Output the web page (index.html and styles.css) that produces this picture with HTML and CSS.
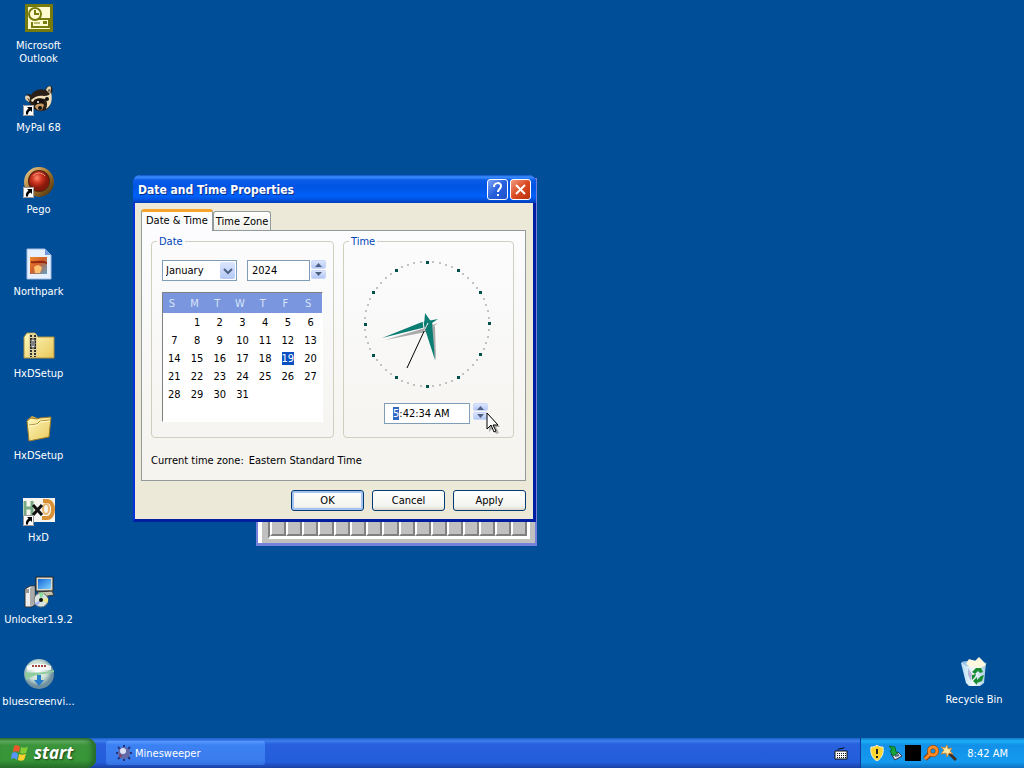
FILE: index.html
```
<!DOCTYPE html>
<html lang="en">
<head>
<meta charset="UTF-8">
<title>Date and Time Properties</title>
<link rel="stylesheet" href="styles.css">
</head>
<body>
<!-- shared shapes -->
<svg class="defs" aria-hidden="true">
  <defs>
    <symbol id="shortcut" viewBox="0 0 11 11">
      <path d="M0 0h11v11H0z" fill="#fff"/><path d="M.5.5h10v10H.5z" fill="none" stroke="#999"/>
      <path d="M4 2h5v5L7.500 5.500C5.500 6.500 5 8 5 9.500H3C2.500 7 3.500 5 5.500 3.600z" fill="#000"/>
    </symbol>
    <linearGradient id="folder" x1="0" y1="0" x2="1" y2="1"><stop offset="0" stop-color="#fffac0"/><stop offset="1" stop-color="#e8c75a"/></linearGradient>
    <radialGradient id="red" cx=".4" cy=".35"><stop offset="0" stop-color="#ff8a70"/><stop offset=".5" stop-color="#cf3520"/><stop offset="1" stop-color="#87180c"/></radialGradient>
    <linearGradient id="gold" x1="0" y1="0" x2="1" y2="1"><stop offset="0" stop-color="#f5d79a"/><stop offset=".5" stop-color="#a8742a"/><stop offset="1" stop-color="#3e2810"/></linearGradient>
    <radialGradient id="globe" cx=".45" cy=".4"><stop offset="0" stop-color="#fff"/><stop offset=".65" stop-color="#c8ddd2"/><stop offset="1" stop-color="#6d8fa0"/></radialGradient>
    <linearGradient id="bin" x1="0" y1="0" x2="1" y2="0"><stop offset="0" stop-color="#b9dcf2"/><stop offset=".5" stop-color="#f2fafc"/><stop offset="1" stop-color="#a5cbe2"/></linearGradient>
    <linearGradient id="screen" x1="0" y1="0" x2="1" y2="1"><stop offset="0" stop-color="#1565d8"/><stop offset="1" stop-color="#7fd4ff"/></linearGradient>
    <linearGradient id="photo" x1="0" y1="0" x2="1" y2="1"><stop offset="0" stop-color="#f08a30"/><stop offset=".45" stop-color="#d3602c"/><stop offset="1" stop-color="#5da3c8"/></linearGradient>
  </defs>
</svg>

<main class="desktop">
  <nav class="icons" aria-label="Desktop">
    <a href="#" class="icon">
      <svg viewBox="0 0 32 32"><path d="M2 2h28v28H2z" fill="#777a0c"/><path d="M5 5h22v22H5z" fill="#fffbd0"/><path d="M13 17h13v8H9v-5" fill="none" stroke="#777a0c" stroke-width="2"/><circle cx="12" cy="12" r="6" fill="#fffbd0" stroke="#777a0c" stroke-width="2"/><path d="M12 8v4h4" fill="none" stroke="#777a0c" stroke-width="2"/><path d="M20 19h4v3h-4z" fill="#777a0c"/><path d="M11 21h6" stroke="#777a0c"/></svg>
      <span>Microsoft Outlook</span>
    </a>
    <a href="#" class="icon">
      <svg viewBox="0 0 32 32"><path d="M3 13c0-3 2-4 5-2C11 6 17 4 22 6c1-3 4-5 6-4 2 2 2 6 0 9 1 6 0 12-5 15-6 3-14 0-16-7-3-1-4-3-4-6z" fill="#2c2118"/><path d="M2 13c1-2 4-2 5 1l-1 4c-3-1-4-3-4-5zM23 6c1-4 5-5 5-2l-1 6z" fill="#e2d2b2"/><path d="M4 14l2 1v2zM25 6l2-1-1 4z" fill="#4b3524"/><path d="M8 16c4-4 9-5 13-4 3 0 6-1 7-4 2 8 0 14-5 17 2-5 1-8-1-10-5-1-9 0-13 3z" fill="#f0dfb8"/><path d="M11 16c3-2 7-2 9-1l1 4-9 2z" fill="#17110d"/><path d="M12 22c3-3 7-3 9-1l-2 5c-3 1-6 0-7-4z" fill="#c69a62"/><circle cx="15" cy="18" r="1" fill="#fff"/><circle cx="24" cy="15" r="2" fill="#111"/><circle cx="17" cy="24" r="2" fill="#111"/><use href="#shortcut" y="21" width="11" height="11"/></svg>
      <span>MyPal 68</span>
    </a>
    <a href="#" class="icon">
      <svg viewBox="0 0 32 32"><circle cx="16" cy="16" r="15" fill="url(#gold)"/><circle cx="16" cy="15" r="11" fill="#502411"/><circle cx="16" cy="15" r="10" fill="url(#red)"/><path d="M10 10c3-4 9-4 12 0" fill="none" stroke="#e89580"/><use href="#shortcut" y="21" width="11" height="11"/></svg>
      <span>Pego</span>
    </a>
    <a href="#" class="icon">
      <svg viewBox="0 0 32 32"><path d="M4 1h18l6 6v24H4z" fill="#e6f0ff" stroke="#a5bce2"/><path d="M22 1v6h6z" fill="#719ae0"/><path d="M7 9h17v17H7z" fill="url(#photo)"/><path d="M8 13c5 1 10-2 16 1v2c-5-2-11 0-16-1z" fill="#952811"/><path d="M11 19c3-3 7-2 8 1l-2 5h-5z" fill="#ffc070"/></svg>
      <span>Northpark</span>
    </a>
    <a href="#" class="icon">
      <svg viewBox="0 0 32 32"><path d="M1 7l3-4h8l3 4h16v21H1z" fill="url(#folder)" stroke="#a98f3e"/><path d="M6 5l3-2h2l3 2v21H6z" fill="#ded19a"/><path d="M8 5v22M12 5v22" stroke="#333" stroke-width="2" stroke-dasharray="2 1"/><path d="M8 9h4v9H8z" fill="#ddd" stroke="#222"/><path d="M10 11v5" stroke="#222"/></svg>
      <span>HxDSetup</span>
    </a>
    <a href="#" class="icon">
      <svg viewBox="0 0 32 32"><path d="M4 8l5-4 5 2 2 1 12-1v4L8 13z" fill="#d4ae44"/><path d="M4 9l4-3 6 1 3-1 11-1-2 20-20 4z" fill="url(#folder)" stroke="#9b7a27"/><path d="M6 13l8-1 3-3 10-1" fill="none" stroke="#b08d38"/><path d="M6 14l8-1 3-3 10-1" fill="none" stroke="#fffbd0"/></svg>
      <span>HxDSetup</span>
    </a>
    <a href="#" class="icon">
      <svg viewBox="0 0 32 32"><path d="M0 4h32v24H0z" fill="#f7f5ef"/><path d="M2 7v14M9 7v14M2 14h7" stroke="#78aa83" stroke-width="3" fill="none"/><path d="M20 7h4c8 0 8 17 0 17h-5" stroke="#d99135" stroke-width="4" fill="none"/><ellipse cx="23" cy="15" rx="3" ry="5" fill="none" stroke="#e8b46b" stroke-width="2"/><path d="M10 11l9 10M19 11l-9 10" stroke="#111" stroke-width="3"/><use href="#shortcut" y="21" width="11" height="11"/></svg>
      <span>HxD</span>
    </a>
    <a href="#" class="icon">
      <svg viewBox="0 0 32 32"><path d="M13 1h17v14H13z" fill="#ddd9c8" stroke="#222"/><path d="M15 3h13v10H15z" fill="url(#screen)"/><path d="M14 16l15-1 2 4-12 2z" fill="#c8c4b2" stroke="#333"/><path d="M2 13l5-3h5v19l-4 2H2z" fill="#eee" stroke="#333"/><path d="M7 12l4-2v19l-4 1z" fill="#aaa"/><path d="M3 14h3M3 16h3" stroke="#444"/><circle cx="18" cy="24" r="7" fill="#d7e4df" stroke="#777"/><path d="M18 24l-2-7a7 7 0 0 1 5 0z" fill="#8fdc9f"/><path d="M18 24l-6 3a7 7 0 0 0 3 3z" fill="#a9b6ef"/><path d="M18 24l7-2a7 7 0 0 1-1 5z" fill="#efe889"/><circle cx="18" cy="24" r="2" fill="#111"/></svg>
      <span>Unlocker1.9.2</span>
    </a>
    <a href="#" class="icon">
      <svg viewBox="0 0 32 32"><circle cx="16" cy="16" r="15" fill="url(#globe)"/><path d="M2 14c8 1 20 1 29-2v2c-12 3-20 2-28 8z" fill="#8ecb9d"/><path d="M4 8c8-3 16-3 24 0v4H4z" fill="#fff" opacity=".8"/><path d="M9 8h14" stroke="#9e4a3c" stroke-width="2" stroke-dasharray="2 1"/><path d="M14 17h4v5h3l-5 6-5-6h3z" fill="#267dcb"/></svg>
      <span>bluescreenvi...</span>
    </a>
  </nav>

  <a href="#" class="icon recycle">
    <svg viewBox="0 0 32 32"><path d="M3 7l5 20 3 3h11l4-3 2-20z" fill="url(#bin)"/><path d="M3 6l11-2 15 3-7 4-14-1z" fill="#9cc3e8"/><path d="M8 8l3-5 6 2 4-4 4 4 3 4-6 3-10-1z" fill="#fff7de"/><path d="M10 12l4 6-1 7-3-6z" fill="#b8b5da"/><path d="M14 16l4-4h5l2 4-3 1-2-2-3 3zM26 19l-2 6-5 2v2l-4-4 4-4v3l4-4zM14 19l4-1-1 3-3 3z" fill="#198b32"/></svg>
    <span>Recycle Bin</span>
  </a>

  <!-- minesweeper, mostly hidden behind the dialog -->
  <section class="mines" aria-label="Minesweeper">
    <div class="minefield"><i></i><i></i><i></i><i></i><i></i><i></i><i></i><i></i><i></i><i></i><i></i><i></i><i></i><i></i><i></i><i></i></div>
  </section>

  <section class="dialog" aria-labelledby="dialog-title">
    <header class="titlebar">
      <h1 id="dialog-title">Date and Time Properties</h1>
      <button class="caption" aria-label="Help"><svg viewBox="0 0 19 19"><path d="M6 7c0-5 7-5 7-1 0 3-3 3-3 6M10 14v2" fill="none" stroke="#fff" stroke-width="2"/></svg></button>
      <button class="caption close" aria-label="Close"><svg viewBox="0 0 19 19"><path d="M5 5l9 9M14 5l-9 9" stroke="#fff" stroke-width="2"/></svg></button>
    </header>

    <form class="dialog-body" onsubmit="return false">
      <div class="tabs" role="tablist">
        <button type="button" class="tab active" role="tab" aria-selected="true">Date &amp; Time</button>
        <button type="button" class="tab" role="tab" aria-selected="false">Time Zone</button>
      </div>

      <div class="panel" role="tabpanel">
        <div class="groups">
          <fieldset class="group date">
            <legend>Date</legend>
            <div class="month-year">
              <div class="combo">
                <select aria-label="Month"><option>January</option></select>
                <span class="drop"><svg viewBox="0 0 15 17"><path d="M4 7l4 4 4-4" fill="none" stroke="#4d6185" stroke-width="2"/></svg></span>
              </div>
              <input class="field year" type="text" value="2024" aria-label="Year">
              <div class="spin">
                <button type="button" aria-label="Next year"><svg viewBox="0 0 9 5"><path d="M1 5l3.500-4L8 5z" fill="#4d6185"/></svg></button>
                <button type="button" aria-label="Previous year"><svg viewBox="0 0 9 5"><path d="M1 0l3.500 4L8 0z" fill="#4d6185"/></svg></button>
              </div>
            </div>
            <table class="calendar">
              <thead><tr><th>S</th><th>M</th><th>T</th><th>W</th><th>T</th><th>F</th><th>S</th></tr></thead>
              <tbody>
                <tr><td></td><td>1</td><td>2</td><td>3</td><td>4</td><td>5</td><td>6</td></tr>
                <tr><td>7</td><td>8</td><td>9</td><td>10</td><td>11</td><td>12</td><td>13</td></tr>
                <tr><td>14</td><td>15</td><td>16</td><td>17</td><td>18</td><td><b>19</b></td><td>20</td></tr>
                <tr><td>21</td><td>22</td><td>23</td><td>24</td><td>25</td><td>26</td><td>27</td></tr>
                <tr><td>28</td><td>29</td><td>30</td><td>31</td><td></td><td></td><td></td></tr>
                <tr><td></td><td></td><td></td><td></td><td></td><td></td><td></td></tr>
              </tbody>
            </table>
          </fieldset>

          <fieldset class="group time">
            <legend>Time</legend>
            <svg class="clock" viewBox="0 0 130 130" role="img" aria-label="Clock">
              <g id="ticks"></g>
              <path d="M22 81l40-12 13-5-12 9z" fill="#aaa"/>
              <path d="M66 60l6 8 1 34-6-24z" fill="#aaa"/>
              <path d="M19 79l40-16 16-3-12 8z" fill="#0b7d73"/>
              <path d="M62 54l7 10 3 37-11-34z" fill="#0b7d73"/>
              <path d="M64 66l-20 43" stroke="#000"/>
              <path d="M60 62l1 7M65 64l-4 8" stroke="#fff"/>
            </svg>
            <div class="time-row">
              <input class="field clock-field" id="clockField" type="text" value="5:42:34 AM" aria-label="Time">
              <div class="spin small">
                <button type="button" aria-label="Later"><svg viewBox="0 0 9 5"><path d="M1 5l3.500-4L8 5z" fill="#4d6185"/></svg></button>
                <button type="button" aria-label="Earlier"><svg viewBox="0 0 9 5"><path d="M1 0l3.500 4L8 0z" fill="#4d6185"/></svg></button>
              </div>
            </div>
          </fieldset>
        </div>
        <p class="zone"><span>Current time zone:</span><span>Eastern Standard Time</span></p>
      </div>

      <div class="actions">
        <button type="button" class="btn default">OK</button>
        <button type="button" class="btn">Cancel</button>
        <button type="button" class="btn">Apply</button>
      </div>
    </form>
  </section>

  <svg class="cursor" viewBox="0 0 14 22" aria-hidden="true"><path d="M3 3v17l4-4 3 6 3-1-3-6h4z" fill="#000" opacity=".3"/><path d="M1 1v16l4-4 3 7 2-1-3-6h5z" fill="#fff" stroke="#000"/></svg>
</main>

<footer class="taskbar">
  <button class="start">
    <svg viewBox="0 0 20 18"><path d="M4 2c2-1 4-1 6 1L9 8C7 7 5 7 3 8z" fill="#f0562b"/><path d="M11 3c2 1 4 1 7 0l-2 6c-2 1-4 1-6 0z" fill="#84cc35"/><path d="M2 9c2-1 4-1 6 1l-1 6c-2-2-4-2-6-1z" fill="#5794ff"/><path d="M9 10c2 1 4 1 7 0l-2 6c-2 1-4 1-6 0z" fill="#ffd02d"/></svg>
    <span>start</span>
  </button>
  <button class="task">
    <svg viewBox="0 0 16 16"><path d="M8 0v16M0 8h16M2 2l12 12M14 2L2 14" stroke="#263178" stroke-width="2"/><circle cx="8" cy="8" r="6" fill="#626ba8"/><circle cx="7" cy="6" r="3" fill="#dde3f6"/><path d="M3 9l3 1-2 3z" fill="#983c50"/></svg>
    <span>Minesweeper</span>
  </button>
  <svg class="keyboard" viewBox="0 0 14 14"><path d="M4 4c0-3 6 0 6-3" fill="none" stroke="#111"/><path d="M1 5h12v8H1z" fill="#fff" stroke="#111"/><path d="M3 7.500h9M3 9.500h9M3 11.500h9" stroke="#111" stroke-dasharray="1 1"/></svg>
  <div class="tray">
    <svg viewBox="0 0 16 16"><path d="M8 0c2 2 4 2 6 2 1 6-1 11-6 14C3 13 1 8 2 2c2 0 4 0 6-2z" fill="#ffd52e" stroke="#f5f0d0"/><path d="M8 4v5M8 11v2" stroke="#222" stroke-width="2"/></svg>
    <svg viewBox="0 0 16 16"><path d="M4 9l7-2 4 4-7 4z" fill="#d9dfe2" stroke="#334"/><path d="M8 11l4-1" stroke="#55608c" stroke-width="2"/><path d="M2 1l6 1 1 5 2 1-5 3-3-5 2-1z" fill="#18a53c" stroke="#086d28"/></svg>
    <svg viewBox="0 0 16 16"><path d="M0 0h16v16H0z" fill="#000"/></svg>
    <svg viewBox="0 0 16 16"><circle cx="10" cy="6" r="4" fill="none" stroke="#7d360a" stroke-width="4"/><path d="M7 9l-5 5" stroke="#7d360a" stroke-width="5"/><circle cx="10" cy="6" r="4" fill="none" stroke="#f78a25" stroke-width="3"/><path d="M7 9l-5 5" stroke="#f78a25" stroke-width="3"/></svg>
    <svg viewBox="0 0 16 16"><path d="M6 6l9 9" stroke="#403022" stroke-width="3"/><path d="M6 0l1 4 4-1-2 3 3 3-4-1-2 4-1-4-5 1 3-4-3-3 4 1z" fill="#ffe9a0" stroke="#c98a3b"/></svg>
    <time>8:42 AM</time>
  </div>
</footer>

<script>
// minute dots and hour marks around the dial
const ticks=document.getElementById('ticks');
for(let i=0;i<60;i++){
  const a=i*Math.PI/30, hour=i%5===0, s=hour?3:2;
  const r=document.createElementNS('http://www.w3.org/2000/svg','rect');
  r.setAttribute('x',Math.round(64+62*Math.sin(a)-s/2));
  r.setAttribute('y',Math.round(65-62*Math.cos(a)-s/2));
  r.setAttribute('width',s); r.setAttribute('height',s);
  r.setAttribute('class',hour?'hour':'minute');
  ticks.appendChild(r);
}
// the hour part starts selected
const clockField=document.getElementById('clockField');
clockField.focus();
clockField.setSelectionRange(0,1);
</script>
</body>
</html>
```
FILE: styles.css
```
*{box-sizing:border-box;}
body{
  margin:0;
  height:100vh;
  display:flex;
  flex-direction:column;
  overflow:hidden;
  background:#004e98;
  font:11px/13px Tahoma, "DejaVu Sans Condensed", "Noto Sans", sans-serif;
  color:#000;
}
button,input,select{font:inherit;color:inherit;margin:0;padding:0;}
svg{display:block;}
.defs{position:absolute;width:0;height:0;}

/* desktop */
.desktop{flex:1;min-height:0;position:relative;}
.icons{display:flex;flex-direction:column;width:77px;padding-top:2px;}
.icon{
  height:82px;
  display:flex;
  flex-direction:column;
  align-items:center;
  gap:5px;
  color:#fff;
  text-align:center;
  text-decoration:none;
}
.icon svg{width:32px;height:32px;flex:none;}
.recycle{position:absolute;right:11px;bottom:0;width:78px;}

/* windows */
.mines{
  position:absolute;
  left:256px;
  top:178px;
  width:281px;
  height:368px;
  display:flex;
  align-items:flex-end;
  background:linear-gradient(90deg,#fff 4px,#c0c0c0 4px);
  border:3px solid #7681db;
  border-width:3px 2px;
}
.minefield{
  flex:1;
  display:flex;
  margin:0 5px 4px 10px;
  border:3px solid #fff;
  border-left:2px solid #808080;
}
.minefield i{
  flex:1;
  height:16px;
  background:#c0c0c0;
  border:2px solid #fff;
  border-right-color:#808080;
  border-bottom-color:#808080;
}
.dialog{
  position:absolute;
  left:133px;
  top:175px;
  width:403px;
  background:#ece9d8;
  border:solid #0831d9;
  border-width:0 3px 3px 2px;
  border-color:#0831d9 #001ea0 #001ea0 #0831d9;
  border-radius:7px 7px 0 0;
}
.titlebar{
  display:flex;
  align-items:center;
  gap:2px;
  height:28px;
  margin:0 -3px 0 -2px;
  padding:1px 5px 0;
  border-radius:7px 7px 0 0;
  background:linear-gradient(#0b50c8 0,#3d91ff 2px,#0a5ce8 5px,#0054e3 12px,#0061fa 21px,#0050dc 25px,#003bb5 28px);
}
.titlebar h1{
  flex:1;
  margin:0;
  font:bold 12px/16px "Trebuchet MS", "DejaVu Sans Condensed", sans-serif;
  color:#fff;
  text-shadow:1px 1px #0f2f86;
}
.caption{
  width:21px;
  height:21px;
  border:1px solid #fff;
  border-radius:3px;
  background:linear-gradient(135deg,#7fa6f5,#2660dd 50%,#2352c8);
}
.caption svg{width:19px;height:19px;}
.close{background:linear-gradient(135deg,#f09a80,#dc4a22 50%,#b83210);}

.dialog-body{padding:6px 7px 8px 6px;}
.tabs{display:flex;align-items:flex-end;height:21px;}
.tab{
  height:19px;
  padding:0 2px;
  background:linear-gradient(#fff,#efefea);
  border:1px solid #919b9c;
  border-bottom:0;
  border-radius:3px 3px 0 0;
}
.tab.active{
  height:22px;
  margin-bottom:-1px;
  padding:0 4px 2px;
  z-index:1;
  background:#fcfcfe;
  border-top:3px solid #f5a52b;
}
.panel{
  padding:4px 11px 13px 9px;
  background:linear-gradient(#fcfcfe,#f4f3ee);
  border:1px solid #919b9c;
}
.groups{display:flex;gap:9px;}
.group{
  min-width:0;
  height:203px;
  margin:0;
  padding:11px 10px 0;
  border:1px solid #d0d0bf;
  border-radius:4px;
}
.group legend{margin-left:-5px;padding:0 2px;color:#0046b5;}
.date{width:183px;}
.time{flex:1;}
.month-year{display:flex;margin:1px -4px 11px 0;}
.combo{flex:none;position:relative;width:75px;height:21px;margin-right:10px;}
.combo select{
  width:100%;
  height:100%;
  padding-left:3px;
  appearance:none;
  background:#fff;
  border:1px solid #7f9db9;
  border-radius:0;
}
.drop{
  position:absolute;
  top:2px;
  right:2px;
  width:15px;
  height:17px;
  background:linear-gradient(#dbe5fe,#b4c8f6);
  border-radius:2px;
  pointer-events:none;
}
.field{
  flex:none;
  height:21px;
  background:#fff;
  border:1px solid #7f9db9;
  outline:none;
}
.year{width:63px;padding-left:4px;}
.spin{flex:none;display:flex;flex-direction:column;gap:1px;margin-left:1px;width:15px;}
.spin button{
  height:9px;
  display:grid;
  place-items:center;
  background:linear-gradient(#dbe5fe,#b4c8f6);
  border:1px solid #cbd8f8;
  border-radius:2px;
}
.spin svg{width:9px;height:5px;}
.spin.small{margin-left:3px;}
.spin.small button{height:8px;}
.calendar{
  width:161px;
  table-layout:fixed;
  border-collapse:separate;
  border-spacing:0;
  background:#fff;
  border:1px solid #fff;
  border-top-color:#808080;
  border-left-color:#808080;
}
.calendar th,.calendar td{height:18px;padding:0;text-align:center;}
.calendar th{padding:0 5px 0 0;height:20px;background:#7a96df;color:#d8e4f8;font-weight:normal;}
.calendar b{background:#0a50c0;color:#fff;font-weight:normal;}

.clock{width:130px;height:130px;margin-left:9px;}
#ticks .hour{fill:#00504c;}
#ticks .minute{fill:#c2c2c2;}
.time-row{display:flex;margin:14px 0 0 30px;}
.clock-field{width:86px;padding-left:8px;}
.clock-field::selection{background:#316ac5;color:#fff;}
.zone{display:flex;gap:5px;margin:16px 0 0;}
.actions{display:flex;justify-content:flex-end;gap:8px;margin-top:9px;}
.btn{
  width:73px;
  height:21px;
  background:linear-gradient(#fff,#f3f3ef 80%,#dcd8cb);
  border:1px solid #003c74;
  border-radius:3px;
}
.default{box-shadow:inset 0 0 0 2px #a6c2f2;}
.cursor{position:absolute;left:486px;top:412px;width:14px;height:22px;}

/* taskbar */
.taskbar{
  flex:none;
  display:flex;
  align-items:center;
  height:30px;
  color:#fff;
  background:linear-gradient(#1f5fc8 0,#3c80f0 3px,#2860dd 6px,#245edb 24px,#1941a5);
}
.start{
  display:flex;
  align-items:center;
  gap:4px;
  width:96px;
  height:30px;
  padding-left:10px;
  border:0;
  border-radius:0 9px 9px 0;
  background:linear-gradient(#2c6b2c 0,#62ad62 3px,#3b943b 7px,#379637 22px,#25702a);
  box-shadow:inset -4px 0 5px #276b2b;
  font:italic bold 17px/20px "Open Sans", sans-serif;
  text-shadow:1px 1px 2px #173d17;
}
.start svg{width:20px;height:18px;}
.task{
  display:flex;
  align-items:center;
  gap:3px;
  width:159px;
  height:24px;
  margin-left:10px;
  padding-left:10px;
  border:0;
  border-radius:3px;
  background:linear-gradient(#5a9cff,#3c81f3 4px,#3a7bed 20px,#3070df);
}
.task svg{width:16px;height:16px;}
.keyboard{width:14px;height:14px;margin:0 12px 0 auto;}
.tray{
  display:flex;
  align-items:center;
  gap:2px;
  height:30px;
  padding:0 16px 0 8px;
  border-left:1px solid #0e3d9b;
  background:linear-gradient(#1478c8 0,#1cb0f5 3px,#1290e8 7px,#149aee 24px,#0d70c0);
}
.tray svg{width:16px;height:16px;}
.tray time{margin-left:8px;}
```
